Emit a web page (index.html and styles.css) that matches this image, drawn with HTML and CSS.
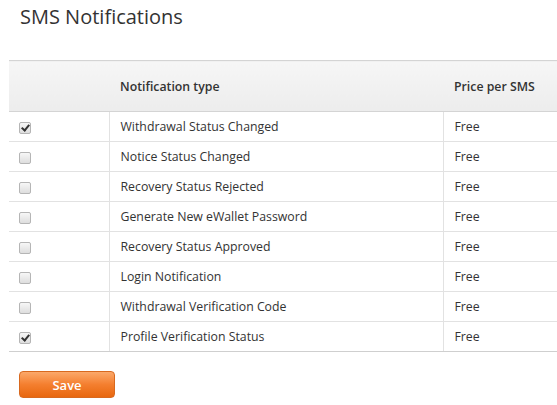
FILE: index.html
```html
<!DOCTYPE html>
<html lang="en">
<head>
  <meta charset="UTF-8" />
  <title>SMS Notifications</title>
  <link rel="stylesheet" href="styles.css">
</head>
<body>

  <h2 class="title">SMS Notifications</h2>

  <table class="sms-table">
    <thead>
      <tr>
        <th class="col-check"></th>
        <th class="col-type">Notification type</th>
        <th class="col-price">Price per SMS</th>
      </tr>
    </thead>
    <tbody>
      <tr><td><input type="checkbox" checked></td><td>Withdrawal Status Changed</td><td>Free</td></tr>
      <tr><td><input type="checkbox"></td><td>Notice Status Changed</td><td>Free</td></tr>
      <tr><td><input type="checkbox"></td><td>Recovery Status Rejected</td><td>Free</td></tr>
      <tr><td><input type="checkbox"></td><td>Generate New eWallet Password</td><td>Free</td></tr>
      <tr><td><input type="checkbox"></td><td>Recovery Status Approved</td><td>Free</td></tr>
      <tr><td><input type="checkbox"></td><td>Login Notification</td><td>Free</td></tr>
      <tr><td><input type="checkbox"></td><td>Withdrawal Verification Code</td><td>Free</td></tr>
      <tr><td><input type="checkbox" checked></td><td>Profile Verification Status</td><td>Free</td></tr>
    </tbody>
  </table>

  <div class="actions">
    <button class="btn-save">Save</button>
  </div>

</body>
</html>
```

FILE: styles.css
```css
body {
  margin: 0;
  font-family: "Open Sans", "Segoe UI", sans-serif;
  color: #333;
  background: #fff;
  overflow: hidden;
}
.title {
  margin: 0;
  padding: 3px 0 0 20px;
  height: 57px;
  font-size: 20px;
  font-weight: normal;
  color: #333;
}
.sms-table {
  margin-left: 9px;
  width: 548px;
  border-collapse: collapse;
  font-size: 12.3px;
}
.sms-table th {
  height: 50px;
  text-align: left;
  font-weight: 600;
  padding: 0 11px;
  background: linear-gradient(#f6f6f6, #ececec);
  border-top: 1px solid #d4d4d4;
  border-bottom: 1px solid #d4d4d4;
}
.sms-table td {
  height: 29px;
  padding: 0 11px;
  border-bottom: 1px solid #e2e2e2;
}
.sms-table tbody tr:last-child td {
  border-bottom-color: #cfcfcf;
}
.sms-table td + td {
  border-left: 1px solid #e2e2e2;
}
.col-check {
  width: 78px;
}
.col-type {
  width: 312px;
}
.sms-table input {
  appearance: none;
  -webkit-appearance: none;
  position: relative;
  margin: 0 0 0 -1px;
  width: 12px;
  height: 12px;
  border: 1px solid #b5b5b5;
  border-radius: 2px;
  background: linear-gradient(#f7f7f7, #dedede);
  vertical-align: middle;
}
.sms-table input:checked::after {
  content: "";
  position: absolute;
  left: 3px;
  top: 0;
  width: 3px;
  height: 6px;
  border: solid #333;
  border-width: 0 2px 2px 0;
  transform: rotate(40deg);
}
.actions {
  padding: 19px 0 0 19px;
}
.btn-save {
  width: 96px;
  height: 27px;
  border: 1px solid #d8691f;
  border-radius: 4px;
  background: linear-gradient(#fba86a, #f47f2f 50%, #e8670f);
  color: #fff;
  font-family: inherit;
  font-size: 13px;
  font-weight: 600;
  cursor: pointer;
}
```
